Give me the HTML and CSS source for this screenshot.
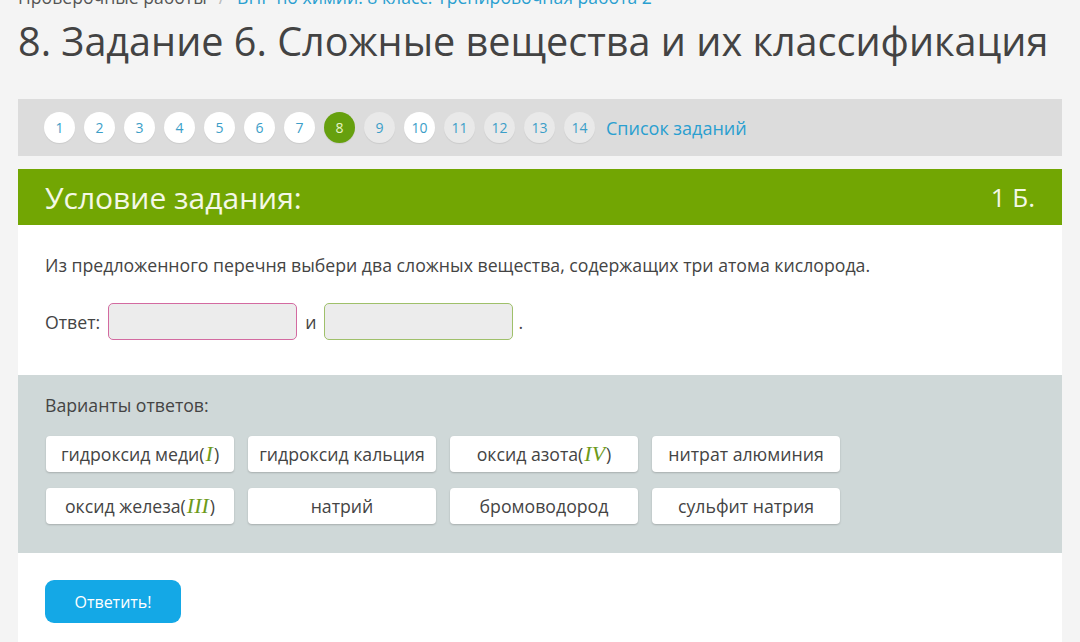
FILE: index.html
```html
<!DOCTYPE html>
<html lang="ru">
<head>
<meta charset="utf-8">
<link rel="stylesheet" href="styles.css">
</head>
<body>
<div class="page">
  <div class="crumbs"><span class="crumb-gray">Проверочные работы</span><span class="sep">/</span><a class="crumb-link">ВПР по химии. 8 класс. Тренировочная работа 2</a></div>
  <h1 class="title">8. Задание 6. Сложные вещества и их классификация</h1>
  <div class="nav">
    <span class="num">1</span><span class="num">2</span><span class="num">3</span><span class="num">4</span><span class="num">5</span><span class="num">6</span><span class="num">7</span><span class="num active">8</span><span class="num dim">9</span><span class="num">10</span><span class="num dim">11</span><span class="num dim">12</span><span class="num dim">13</span><span class="num dim">14</span>
    <a class="list-link">Список заданий</a>
  </div>
  <div class="card">
    <div class="card-head"><span class="head-title">Условие задания:</span><span class="points">1 Б.</span></div>
    <div class="task">
      <p class="question">Из предложенного перечня выбери два сложных вещества, содержащих три атома кислорода.</p>
      <div class="answer"><span>Ответ:</span><span class="box pink"></span><span>и</span><span class="box green"></span><span class="dot">.</span></div>
    </div>
    <div class="variants">
      <p class="var-title">Варианты ответов:</p>
      <div class="grid">
        <div class="opt">гидроксид меди(<i class="rom">I</i>)</div>
        <div class="opt">гидроксид кальция</div>
        <div class="opt">оксид азота(<i class="rom">IV</i>)</div>
        <div class="opt">нитрат алюминия</div>
        <div class="opt">оксид железа(<i class="rom">III</i>)</div>
        <div class="opt">натрий</div>
        <div class="opt">бромоводород</div>
        <div class="opt">сульфит натрия</div>
      </div>
    </div>
    <div class="footer"><button class="submit">Ответить!</button></div>
  </div>
</div>
</body>
</html>
```
FILE: styles.css
```css
html, body { margin: 0; padding: 0; }
body {
  background: #f4f4f4;
  font-family: "Open Sans", "Noto Sans", sans-serif;
  color: #444;
  overflow: hidden;
}
.page { width: 1044px; margin-left: 18px; }
.crumbs {
  font-size: 17.6px;
  line-height: 20px;
  margin-top: -13px;
  height: 20px;
  white-space: nowrap;
}
.crumb-gray { color: #555; }
.sep { color: #bbb; margin: 0 12px; }
.crumb-link { color: #2a9fd0; }
.title {
  margin: 0;
  font-weight: 400;
  font-size: 39.6px;
  line-height: 46px;
  color: #434343;
  margin-top: 11px;
  white-space: nowrap;
}
.nav {
  margin-top: 35px;
  height: 57px;
  background: #dcdcdc;
  display: flex;
  align-items: center;
  padding-left: 26px;
  gap: 9px;
}
.num {
  width: 31px; height: 31px;
  border-radius: 50%;
  background: #fff;
  color: #3b9ec8;
  font-size: 14px;
  display: flex; align-items: center; justify-content: center;
  box-shadow: 0 1px 1px rgba(0,0,0,0.08);
}
.num.dim { background: #e9e9e9; }
.num.active { background: #66a00e; color: #e8f5c8; }
.list-link { color: #2a9fd0; font-size: 18px; margin-left: 2px; }
.card { margin-top: 13px; background: #fff; }
.card-head {
  height: 56px;
  background: #72a603;
  display: flex; align-items: center; justify-content: space-between;
  padding: 0 27px;
  color: #f4f8e6;
}
.head-title { font-size: 30px; }
.points { font-size: 26px; }
.task { padding: 28px 27px 35px; }
.question { margin: 0; font-size: 17.7px; line-height: 24px; color: #444; }
.answer {
  margin-top: 26px;
  display: flex; align-items: center; gap: 8px;
  font-size: 17.7px;
}
.box {
  width: 187px; height: 35px;
  background: #ececec;
  border-radius: 5px;
  border: 1px solid #d36aa0;
}
.box.green { border-color: #9fc06a; }
.dot { margin-left: -3px; }
.variants {
  background: #cfd8d8;
  padding: 18px 27px 29px;
}
.var-title { margin: 0; font-size: 17.7px; line-height: 24px; color: #444; }
.grid {
  margin-top: 19px;
  display: grid;
  grid-template-columns: repeat(4, 188px);
  gap: 16px 14px;
  padding-left: 1px;
}
.opt {
  height: 36px;
  background: #fff;
  border-radius: 4px;
  box-shadow: 0 1px 2px rgba(0,0,0,0.2);
  display: flex; align-items: center; justify-content: center;
  font-size: 17.7px;
  color: #444;
  white-space: nowrap;
}
.rom {
  font-family: "Liberation Serif", "DejaVu Serif", serif;
  color: #6d9a1a;
  font-size: 22px;
  margin: 0 1px;
}
.footer { padding: 27px 27px 30px; }
.submit {
  width: 136px; height: 43px;
  border: none;
  border-radius: 9px;
  background: #14a8e6;
  color: #fff;
  font-family: "Open Sans", sans-serif;
  font-size: 16px;
}
```
